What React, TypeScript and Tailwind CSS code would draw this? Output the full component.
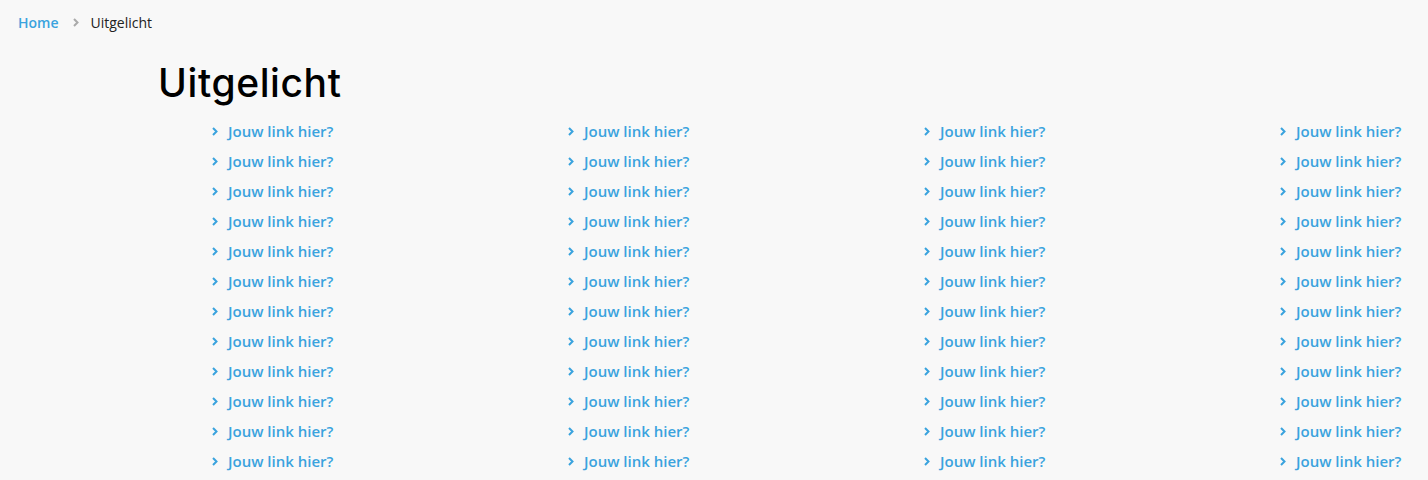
import React from "react";

const COLS = 4;
const ROWS = 12;

function Chevron({ className }: { className?: string }) {
  return (
    <svg width="6" height="9" viewBox="0 0 6 9" className={className} aria-hidden>
      <path d="M1 1l3.5 3.5L1 8" fill="none" stroke="currentColor" strokeWidth="2" />
    </svg>
  );
}

export default function App() {
  return (
    <div className="min-h-[480px] overflow-hidden bg-[#f8f8f8] font-['Open_Sans',sans-serif]">
      <nav className="flex h-[44px] items-center pl-[18px] text-[14px]">
        <a className="font-semibold text-[#3aa3de]">Home</a>
        <Chevron className="ml-[14px] mr-[12px] text-[#aaaaaa]" />
        <span className="text-[#222]">Uitgelicht</span>
      </nav>

      <h1 className="ml-[158px] mt-[16px] font-['Inter',sans-serif] text-[39px] font-medium leading-[46px] tracking-[0.6px] text-black">
        Uitgelicht
      </h1>

      <div className="ml-[212px] mt-[10px] flex">
        {Array.from({ length: COLS }).map((_, c) => (
          <ul key={c} className="w-[356px] shrink-0">
            {Array.from({ length: ROWS }).map((_, r) => (
              <li key={r} className="flex h-[30px] items-center">
                <Chevron className="mr-[10px] text-[#3aa3de]" />
                <a className="text-[15px] font-semibold text-[#3aa3de]">Jouw link hier?</a>
              </li>
            ))}
          </ul>
        ))}
      </div>
    </div>
  );
}
